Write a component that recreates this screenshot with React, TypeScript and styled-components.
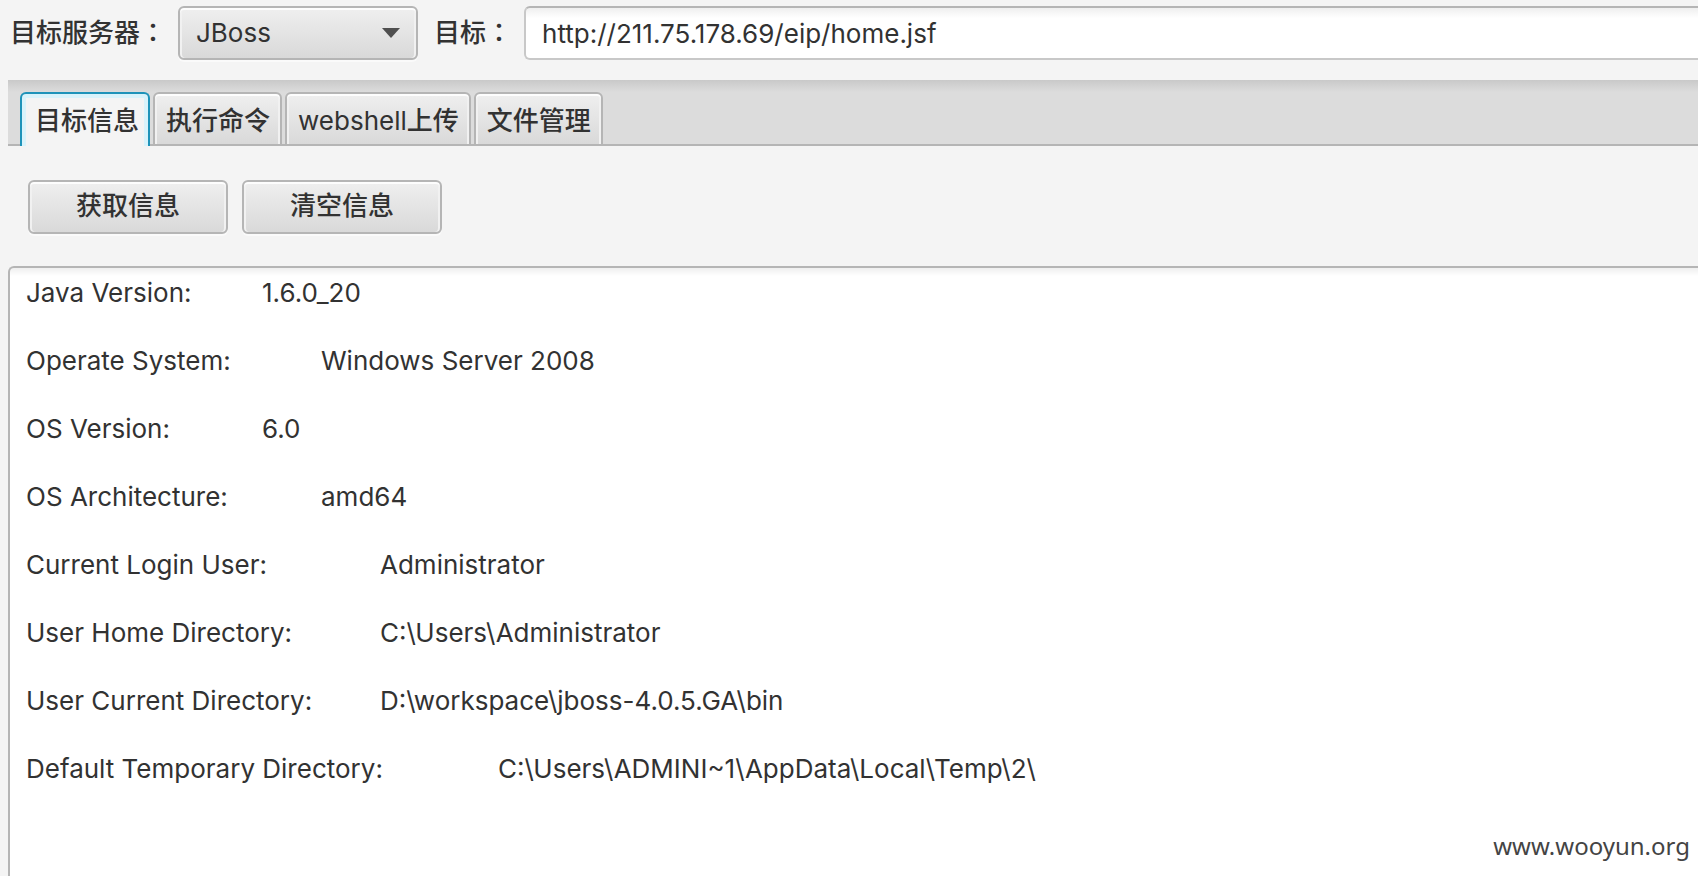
import React, { useState } from 'react';
import styled, { createGlobalStyle } from 'styled-components';

const GlobalStyle = createGlobalStyle`
  *, *::before, *::after { box-sizing: border-box; }
  body {
    margin: 0;
    background: #f4f4f4;
    color: #323232;
  }
  body, button, input, select, textarea {
    font-family: Inter, "Noto Sans CJK SC", sans-serif;
    font-size: 26px;
    line-height: 34px;
  }
`;

const Window = styled.div`
  position: relative;
  display: flex;
  flex-direction: column;
  min-height: 100vh;
  padding: 6px 0 0 8px;
  overflow: hidden;
`;

const TargetBar = styled.div`
  display: flex;
  align-items: center;
  padding-bottom: 20px;
`;

const FieldLabel = styled.label`
  flex: none;
  padding: 0 12px 0 2px;
  font-family: Inter, "Noto Sans CJK TC", sans-serif;
  font-weight: 500;
`;

const SelectBox = styled.div`
  position: relative;
  flex: none;
  width: 240px;
  margin-right: 14px;
`;

const raised = `
  border: 2px solid #b5b5b5;
  border-radius: 6px;
  background: linear-gradient(#efefef, #d9d9d9);
  box-shadow: inset 0 2px #fdfdfd, inset 2px 0 #f1f1f1, inset -2px 0 #f1f1f1, 0 2px #fafafa;
  color: #323232;
`;

const ServerSelect = styled.select`
  ${raised}
  appearance: none;
  display: block;
  width: 100%;
  height: 54px;
  padding: 0 48px 0 16px;
`;

const Arrow = styled.svg`
  position: absolute;
  top: 22px;
  right: 18px;
  pointer-events: none;
`;

const TargetInput = styled.input`
  flex: 1;
  min-width: 0;
  height: 54px;
  padding: 0 16px;
  border: 2px solid #c8c8c8;
  border-top-color: #b5b5b5;
  border-right: 0;
  border-radius: 6px 0 0 6px;
  background: linear-gradient(#efefef, #ffffff 10px);
  color: #323232;
  outline: none;
`;

const TabStrip = styled.div`
  display: flex;
  gap: 3px;
  height: 66px;
  padding: 12px 12px 0;
  background: linear-gradient(#c9c9c9, #dcdcdc 12px);
  box-shadow: inset 0 -2px #b5b5b5;
`;

const Tab = styled.button<{ $selected: boolean }>`
  flex: none;
  height: 54px;
  padding: ${p => (p.$selected ? '2px 9px 0 13px' : '4px 10px 0 11px')};
  border: 2px solid ${p => (p.$selected ? '#1f93b9' : '#b5b5b5')};
  border-bottom: ${p => (p.$selected ? '0' : '2px solid #b5b5b5')};
  border-radius: 6px 6px 0 0;
  background: ${p => (p.$selected ? '#f4f4f4' : 'linear-gradient(#efefef, #d9d9d9)')};
  box-shadow: ${p =>
    p.$selected
      ? 'inset 0 4px #d9f3fb, inset 4px 0 #d9f3fb, inset -4px 0 #d9f3fb'
      : 'inset 0 2px #fdfdfd, inset 2px 0 #f1f1f1, inset -2px 0 #f1f1f1'};
  color: #323232;
  font-weight: 500;
  outline: none;
`;

const Latin = styled.span`
  font-weight: 400;
`;

const Actions = styled.div`
  display: flex;
  gap: 14px;
  padding: 34px 20px 32px;
`;

const ActionButton = styled.button`
  ${raised}
  width: 200px;
  height: 54px;
  padding: 0 0 2px;
  font-weight: 500;
`;

const Output = styled.textarea`
  flex: 1;
  display: block;
  width: 100%;
  padding: 8px 16px;
  border: 2px solid #b5b5b5;
  border-width: 2px 0 0 2px;
  border-radius: 6px 0 0 0;
  background: linear-gradient(#efefef, #ffffff 8px);
  color: #323232;
  tab-size: 59px;
  white-space: pre;
  resize: none;
  outline: none;
`;

const Watermark = styled.div`
  position: absolute;
  right: 8px;
  bottom: 13px;
  color: #444444;
  font-family: "Noto Sans", sans-serif;
  font-size: 24px;
`;

const tabs = [
  { id: 'info', label: '目标信息' },
  { id: 'command', label: '执行命令' },
  { id: 'upload', label: <><Latin>webshell</Latin>上传</> },
  { id: 'files', label: '文件管理' },
];

const info = [
  ['Java Version:', '1.6.0_20'],
  ['Operate System:', 'Windows Server 2008'],
  ['OS Version:', '6.0'],
  ['OS Architecture:', 'amd64'],
  ['Current Login User:', 'Administrator'],
  ['User Home Directory:', 'C:\\Users\\Administrator'],
  ['User Current Directory:', 'D:\\workspace\\jboss-4.0.5.GA\\bin'],
  ['Default Temporary Directory:', 'C:\\Users\\ADMINI~1\\AppData\\Local\\Temp\\2\\'],
];

const report = info.map(([name, value]) => `${name}\t\t${value}`).join('\n\n');

export default function App() {
  const [selected, setSelected] = useState('info');
  const [output, setOutput] = useState(report);

  return (
    <>
      <GlobalStyle />
      <Window>
        <TargetBar>
          <FieldLabel htmlFor="server">目标服务器：</FieldLabel>
          <SelectBox>
            <ServerSelect id="server" defaultValue="JBoss">
              <option>JBoss</option>
            </ServerSelect>
            <Arrow width="18" height="11" viewBox="0 0 18 11" aria-hidden="true">
              <path d="M0 0H18L9 10Z" fill="#4f4f4f" />
            </Arrow>
          </SelectBox>
          <FieldLabel htmlFor="target">目标：</FieldLabel>
          <TargetInput id="target" defaultValue="http://211.75.178.69/eip/home.jsf" />
        </TargetBar>
        <TabStrip role="tablist">
          {tabs.map(tab => (
            <Tab
              key={tab.id}
              role="tab"
              aria-selected={tab.id === selected}
              $selected={tab.id === selected}
              onClick={() => setSelected(tab.id)}
            >
              {tab.label}
            </Tab>
          ))}
        </TabStrip>
        <Actions>
          <ActionButton onClick={() => setOutput(report)}>获取信息</ActionButton>
          <ActionButton onClick={() => setOutput('')}>清空信息</ActionButton>
        </Actions>
        <Output aria-label="目标信息" readOnly spellCheck={false} value={output} />
        <Watermark>www.wooyun.org</Watermark>
      </Window>
    </>
  );
}
